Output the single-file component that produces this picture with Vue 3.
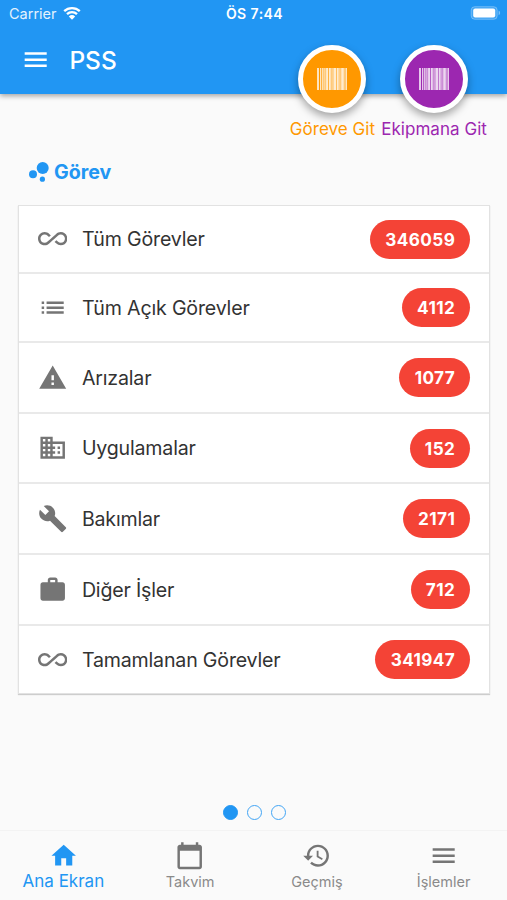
<script setup>
import { ref } from 'vue'

const icons = {
  infinity: 'M18.6 6.62c-1.44 0-2.8.56-3.77 1.53L12 10.66 10.48 12h.01L7.8 14.39c-.64.64-1.49.99-2.4.99-1.87 0-3.39-1.51-3.39-3.38S3.53 8.62 5.4 8.62c.91 0 1.76.35 2.44 1.03l1.13 1 1.51-1.34L9.22 8.2C8.2 7.18 6.84 6.62 5.4 6.62 2.42 6.62 0 9.04 0 12s2.42 5.38 5.4 5.38c1.44 0 2.8-.56 3.77-1.53l2.83-2.5.01.01L13.52 12h-.01l2.69-2.39c.64-.64 1.49-.99 2.4-.99 1.87 0 3.39 1.51 3.39 3.38s-1.52 3.38-3.39 3.38c-.9 0-1.76-.35-2.44-1.03l-1.14-1.01-1.51 1.34 1.27 1.12c1.02 1.01 2.37 1.57 3.82 1.57 2.98 0 5.4-2.41 5.4-5.38s-2.42-5.37-5.4-5.37z',
  list: 'M3 13h2v-2H3v2zm0 4h2v-2H3v2zm0-8h2V7H3v2zm4 4h14v-2H7v2zm0 4h14v-2H7v2zM7 7v2h14V7H7z',
  warning: 'M1 21h22L12 2 1 21zm12-3h-2v-2h2v2zm0-4h-2v-4h2v4z',
  business: 'M12 7V3H2v18h20V7H12zM6 19H4v-2h2v2zm0-4H4v-2h2v2zm0-4H4V9h2v2zm0-4H4V5h2v2zm4 12H8v-2h2v2zm0-4H8v-2h2v2zm0-4H8V9h2v2zm0-4H8V5h2v2zm10 12h-8v-2h2v-2h-2v-2h2v-2h-2V9h8v10zm-2-8h-2v2h2v-2zm0 4h-2v2h2v-2z',
  build: 'M22.7 19l-9.1-9.1c.9-2.3.4-5-1.5-6.9-2-2-5-2.4-7.4-1.3L9 6 6 9 1.6 4.7C.4 7.1.9 10.1 2.9 12.1c1.9 1.9 4.6 2.4 6.9 1.5l9.1 9.1c.4.4 1 .4 1.4 0l2.3-2.3c.5-.4.5-1.1.1-1.4z',
  work: 'M20 6h-4V4c0-1.11-.89-2-2-2h-4c-1.11 0-2 .89-2 2v2H4c-1.11 0-1.99.89-1.99 2L2 19c0 1.11.89 2 2 2h16c1.11 0 2-.89 2-2V8c0-1.11-.89-2-2-2zm-6 0h-4V4h4v2z',
  home: 'M10 20v-6h4v6h5v-8h3L12 3 2 12h3v8z',
  calendar: 'M20 3h-1V1h-2v2H7V1H5v2H4c-1.1 0-2 .9-2 2v16c0 1.1.9 2 2 2h16c1.1 0 2-.9 2-2V5c0-1.1-.9-2-2-2zm0 18H4V8h16v13z',
  history: 'M13 3c-4.97 0-9 4.03-9 9H1l3.89 3.89.07.14L9 12H6c0-3.87 3.13-7 7-7s7 3.13 7 7-3.13 7-7 7c-1.93 0-3.68-.79-4.94-2.06l-1.42 1.42C8.27 19.99 10.51 21 13 21c4.97 0 9-4.03 9-9s-4.03-9-9-9zm-1 5v5l4.28 2.54.72-1.21-3.5-2.08V8H12z',
  menu: 'M3 18h18v-2H3v2zm0-5h18v-2H3v2zm0-7v2h18V6H3z'
}

const gorevler = ref([
  { ad: 'Tüm Görevler', adet: 346059, icon: 'infinity', yukseklik: 68 },
  { ad: 'Tüm Açık Görevler', adet: 4112, icon: 'list', yukseklik: 69 },
  { ad: 'Arızalar', adet: 1077, icon: 'warning', yukseklik: 71 },
  { ad: 'Uygulamalar', adet: 152, icon: 'business', yukseklik: 70 },
  { ad: 'Bakımlar', adet: 2171, icon: 'build', yukseklik: 71 },
  { ad: 'Diğer İşler', adet: 712, icon: 'work', yukseklik: 71 },
  { ad: 'Tamamlanan Görevler', adet: 341947, icon: 'infinity', yukseklik: 67 }
])

const kisayollar = [
  { ad: 'Göreve Git', renk: 'orange' },
  { ad: 'Ekipmana Git', renk: 'purple' }
]

// Barkod çizgileri: [x, genişlik]
const cizgiler = [[0, 2], [3, 0.9], [5.2, 1.2], [7.4, 1], [9.1, 1.9], [12, 1.8], [14.6, 0.9], [16.4, 2.8], [20, 1.7], [22.5, 0.9], [24.2, 2.6], [27.6, 0.8], [29.1, 0.9]]

const sekmeler = [
  { ad: 'Ana Ekran', icon: 'home' },
  { ad: 'Takvim', icon: 'calendar' },
  { ad: 'Geçmiş', icon: 'history' },
  { ad: 'İşlemler', icon: 'menu' }
]
const aktif = ref(0)
const sayfa = ref(0)
</script>

<template>
  <div class="screen">
    <header class="app-bar">
      <div class="status-bar">
        <div class="carrier">
          <span>Carrier</span>
          <svg class="wifi" viewBox="0 0 18 14">
            <path d="M1.2 5.2a11.2 11.2 0 0 1 15.6 0M4 8.2a7.2 7.2 0 0 1 10 0" fill="none" stroke="#fff" stroke-width="2.3" />
            <path d="M5.8 10.4a4.7 4.7 0 0 1 6.4 0L9 13.7z" fill="#fff" />
          </svg>
        </div>
        <span class="clock">ÖS 7:44</span>
        <svg class="battery" viewBox="0 0 31 14">
          <rect x="1.2" y=".7" width="26" height="12.6" rx="3.5" fill="#fff" fill-opacity=".15" stroke="#fff" stroke-opacity=".3" />
          <rect x="3.2" y="2.5" width="22" height="9" rx="2" fill="#fff" />
          <path d="M28.6 4.8c2 .6 2 3.8 0 4.4z" fill="#fff" fill-opacity=".4" />
        </svg>
      </div>
      <div class="toolbar">
        <svg class="icon" viewBox="0 0 24 24"><path :d="icons.menu" /></svg>
        <h1>PSS</h1>
      </div>
    </header>

    <div class="shortcuts">
      <div v-for="k in kisayollar" :key="k.ad" class="shortcut" :class="k.renk">
        <button class="circle">
          <svg viewBox="0 0 30 22">
            <rect class="tint" x="3" y="0" width="27" height="22" />
            <rect v-for="c in cizgiler" :key="c[0]" :x="c[0]" y="0" :width="c[1]" height="22" />
          </svg>
        </button>
        <span>{{ k.ad }}</span>
      </div>
    </div>

    <main>
      <h2>
        <svg viewBox="0 0 20 20">
          <circle cx="4" cy="12.3" r="4" />
          <circle cx="13.7" cy="6" r="6" />
          <circle cx="13.4" cy="17.2" r="2.6" />
        </svg>
        Görev
      </h2>
      <div class="card">
        <div v-for="g in gorevler" :key="g.ad" class="row" :style="{ height: g.yukseklik + 'px' }">
          <svg class="icon" viewBox="0 0 24 24"><path :d="icons[g.icon]" /></svg>
          <span class="name">{{ g.ad }}</span>
          <span class="badge">{{ g.adet }}</span>
        </div>
      </div>
    </main>

    <div class="dots">
      <span v-for="n in 3" :key="n" class="dot" :class="{ full: sayfa === n - 1 }" @click="sayfa = n - 1"></span>
    </div>

    <nav>
      <button v-for="(s, i) in sekmeler" :key="s.ad" class="tab" :class="{ active: aktif === i }" @click="aktif = i">
        <svg class="icon" viewBox="0 0 24 24"><path :d="icons[s.icon]" /></svg>
        <span>{{ s.ad }}</span>
      </button>
    </nav>
  </div>
</template>

<style>
body { margin: 0; background: #fafafa; }
</style>

<style scoped>
* { box-sizing: border-box; }
.screen { width: 507px; height: 900px; display: flex; flex-direction: column; background: #fafafa; font-family: Inter, sans-serif; position: relative; overflow: hidden; }
button { border: none; background: none; padding: 0; font-family: inherit; cursor: pointer; }
.icon { width: 29.4px; height: 29.4px; fill: currentColor; flex: none; display: block; }

.app-bar { height: 94px; flex: none; background: #2196f3; color: #fff; box-shadow: 0 2px 5px rgba(0, 0, 0, 0.35); }
.status-bar { height: 26px; padding: 1px 6px 0 9px; display: grid; grid-template-columns: 1fr auto 1fr; align-items: center; font-size: 14.5px; }
.carrier { display: flex; align-items: center; gap: 6px; color: #e3f2fd; }
.wifi { width: 18px; height: 14px; margin-top: -2px; }
.clock { font-weight: 600; font-size: 14px; letter-spacing: 0.45px; margin-left: -1px; }
.battery { width: 31px; height: 14px; justify-self: end; margin-top: -1px; }
.toolbar { display: flex; align-items: center; height: 68px; padding-left: 20.5px; gap: 19.5px; }
h1 { margin: 0; font-size: 24.5px; font-weight: 500; }

.shortcuts { position: absolute; top: 45px; right: 20px; display: flex; gap: 6px; }
.shortcut { display: flex; flex-direction: column; align-items: center; font-size: 17px; letter-spacing: 0.05px; line-height: 20px; white-space: nowrap; }
.shortcut span { margin-top: 6.4px; }
.circle { width: 68px; height: 68px; border-radius: 50%; border: 5px solid #fff; display: flex; align-items: center; justify-content: center; box-shadow: 0 4px 9px rgba(0, 0, 0, 0.35); }
.circle svg { width: 30px; height: 22px; fill: rgba(255, 255, 255, 0.75); }
.circle .tint { fill: rgba(255, 255, 255, 0.25); }
.orange { color: #ff9800; }
.orange .circle { background: #ff9800; }
.purple { color: #9c27b0; }
.purple .circle { background: #9c27b0; }

main { padding: 66px 17px 0 18px; }
h2 { margin: 0 0 21px 11px; height: 24px; display: flex; align-items: center; gap: 5px; color: #2196f3; font-size: 19.6px; font-weight: 700; }
h2 svg { width: 20px; height: 20px; fill: currentColor; }
.card { background: #fff; border: 1px solid #e2e2e2; box-shadow: 0 1px 1px rgba(0, 0, 0, 0.18); }
.row { display: flex; align-items: center; padding: 0 19px 0 18.5px; border-bottom: 2px solid #e9e9e9; }
.row:last-child { border-bottom: none; }
.row .icon { color: #757575; }
.name { flex: 1; margin-left: 15px; font-size: 19.6px; letter-spacing: -0.18px; color: #333; }
.badge { height: 39px; padding: 0 14.8px 0 15.3px; border-radius: 20px; background: #f44336; color: #fff; font-size: 17.15px; font-weight: 700; letter-spacing: 0.4px; line-height: 39px; }

.dots { margin-top: auto; height: 25px; display: flex; justify-content: center; gap: 9px; padding-left: 1px; }
.dot { width: 15px; height: 15px; border: 1.4px solid #42a5f5; border-radius: 50%; cursor: pointer; }
.full { background: #2196f3; border-color: #2196f3; }

nav { height: 70px; flex: none; display: flex; border-top: 1px solid #f3f3f3; }
.tab { flex: 1; display: flex; flex-direction: column; align-items: center; padding-top: 10px; color: #757575; font-size: 14.5px; }
.tab span { line-height: 20px; margin-top: 2px; color: #8a8a8a; }
.tab.active { color: #2196f3; font-size: 17px; }
.tab.active span { color: #2196f3; margin-top: 1px; }
</style>
